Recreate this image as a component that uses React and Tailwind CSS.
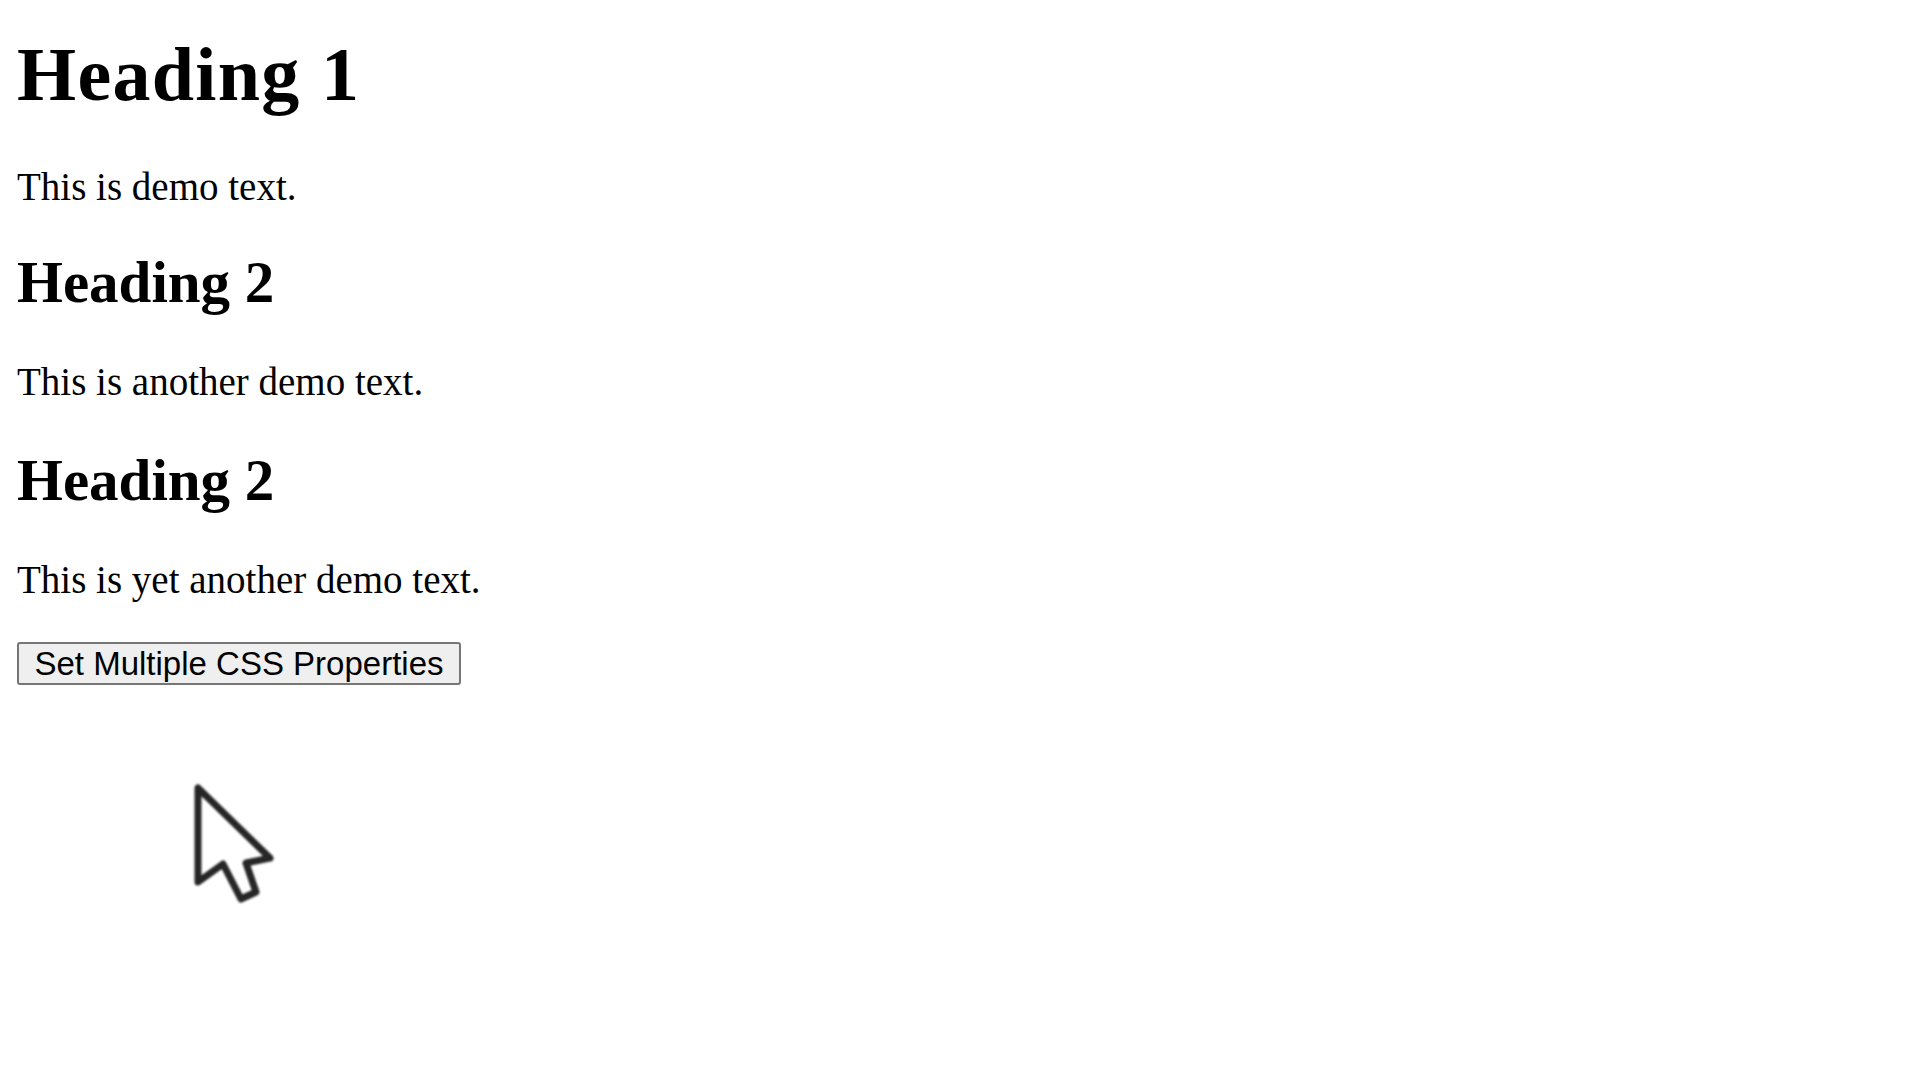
import React from "react";

const serif = "font-['Liberation_Serif','Times_New_Roman',serif]";

const Cursor = () => (
    <svg
        className="absolute left-[190px] top-[779px] blur-[0.8px]"
        width="92"
        height="132"
        viewBox="0 0 92 132"
    >
        <path
            d="M8 9 L8 103 L33 85 L51 120 L66 113 L56 84 L80 79 Z"
            fill="#ffffff"
            stroke="#262626"
            strokeWidth="7"
            strokeLinejoin="round"
        />
    </svg>
);

export default function App() {
    return (
        <div className="relative min-h-screen w-full bg-white text-black">
            <div className="flex flex-col items-start pl-[17px] pt-[36px]">
                <h1 className={`${serif} text-[76px] font-bold leading-none tracking-[1.3px]`}>
                    Heading 1
                </h1>
                <p className={`${serif} mt-[55px] text-[39px] leading-none`}>
                    This is demo text.
                </p>
                <h2 className={`${serif} mt-[47px] text-[59px] font-bold leading-none`}>
                    Heading 2
                </h2>
                <p className={`${serif} mt-[50px] text-[39px] leading-none`}>
                    This is another demo text.
                </p>
                <h2 className={`${serif} mt-[50px] text-[59px] font-bold leading-none`}>
                    Heading 2
                </h2>
                <p className={`${serif} mt-[50px] text-[39px] leading-none`}>
                    This is yet another demo text.
                </p>
                <button
                    type="button"
                    className="mt-[43px] flex h-[43px] w-[444px] items-center justify-center rounded-[3px] border-[2.5px] border-[#767676] bg-[#efefef] font-['Liberation_Sans',Arial,sans-serif] text-[33px] leading-none text-black"
                >
                    Set Multiple CSS Properties
                </button>
            </div>
            <Cursor />
        </div>
    );
}
